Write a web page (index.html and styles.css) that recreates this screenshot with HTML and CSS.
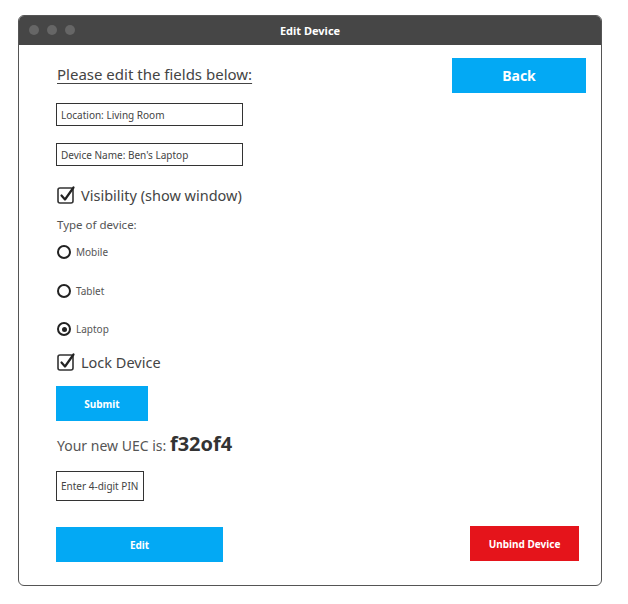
FILE: index.html
```html
<!DOCTYPE html>
<html>
<head>
<meta charset="utf-8">
<link rel="stylesheet" href="styles.css">
</head>
<body>
<div class="window">
  <div class="titlebar">
    <div class="dots"><span class="dot"></span><span class="dot"></span><span class="dot"></span></div>
    <div class="title">Edit Device</div>
  </div>
  <div class="content">
    <div class="header-row">
      <div class="heading">Please edit the fields below:</div>
      <div class="btn btn-back">Back</div>
    </div>
    <div class="field field-1">Location: Living Room</div>
    <div class="field field-2">Device Name: Ben's Laptop</div>
    <div class="check-row check-vis">
      <svg class="checkbox" width="20" height="20" viewBox="0 0 20 20"><rect x="1" y="3" width="15" height="15" rx="2" fill="none" stroke="#333" stroke-width="1.6"/><path d="M4.5 10.5 L8 14.5 L16.5 2.5" fill="none" stroke="#222" stroke-width="2.2" stroke-linecap="round" stroke-linejoin="round"/></svg>
      <span class="check-label">Visibility (show window)</span>
    </div>
    <div class="type-label">Type of device:</div>
    <div class="radio-row radio-mobile"><span class="radio"></span><span class="radio-label">Mobile</span></div>
    <div class="radio-row radio-tablet"><span class="radio"></span><span class="radio-label">Tablet</span></div>
    <div class="radio-row radio-laptop"><span class="radio radio-on"></span><span class="radio-label">Laptop</span></div>
    <div class="check-row check-lock">
      <svg class="checkbox" width="20" height="20" viewBox="0 0 20 20"><rect x="1" y="3" width="15" height="15" rx="2" fill="none" stroke="#333" stroke-width="1.6"/><path d="M4.5 10.5 L8 14.5 L16.5 2.5" fill="none" stroke="#222" stroke-width="2.2" stroke-linecap="round" stroke-linejoin="round"/></svg>
      <span class="check-label">Lock Device</span>
    </div>
    <div class="btn btn-submit">Submit</div>
    <div class="uec">Your new UEC is: <b class="code">f32of4</b></div>
    <div class="field field-pin">Enter 4-digit PIN</div>
    <div class="bottom-row">
      <div class="btn btn-edit">Edit</div>
      <div class="btn btn-unbind">Unbind Device</div>
    </div>
  </div>
</div>
</body>
</html>
```
FILE: styles.css
```css
* { box-sizing: border-box; }
body {
  margin: 0;
  background: #fff;
  font-family: "Noto Sans", "Open Sans", sans-serif;
}
.window {
  margin: 15px 0 0 18px;
  width: 584px;
  border: 1px solid #555;
  border-radius: 6px;
  overflow: hidden;
}
.titlebar {
  height: 29px;
  background: #464646;
  position: relative;
  display: flex;
  align-items: center;
  justify-content: center;
}
.dots {
  position: absolute;
  left: 10px;
  top: 9px;
  display: flex;
  gap: 8px;
}
.dot {
  width: 10px;
  height: 10px;
  border-radius: 50%;
  background: #666;
}
.title {
  color: #fff;
  font-size: 11px;
  font-weight: bold;
}
.content {
  padding: 13px 15px 23px 37px;
  display: flex;
  flex-direction: column;
  align-items: flex-start;
  color: #444;
}
.header-row {
  width: 100%;
  display: flex;
  justify-content: space-between;
  align-items: center;
  height: 35px;
}
.heading {
  font-size: 15px;
  text-decoration: underline;
  text-underline-offset: 3px;
  color: #444;
  padding-left: 1px;
  margin-top: -4px;
}
.btn {
  background: #03a9f4;
  color: #fff;
  font-weight: bold;
  font-size: 10px;
  display: flex;
  align-items: center;
  justify-content: center;
}
.btn-back { width: 134px; height: 35px; font-size: 14px; }
.field {
  border: 1.5px solid #333;
  font-size: 10px;
  color: #444;
  display: flex;
  align-items: center;
  padding-left: 4px;
}
.field-1 { width: 187px; height: 23px; margin-top: 10px; }
.field-2 { width: 187px; height: 23px; margin-top: 17px; }
.check-row {
  display: flex;
  align-items: center;
  height: 20px;
}
.checkbox { margin-left: 1px; margin-right: 4px; }
.check-label { font-size: 14.5px; color: #444; }
.check-vis { margin-top: 19px; }
.check-lock { margin-top: 15px; }
.type-label {
  font-size: 11.5px;
  color: #555;
  height: 16px;
  line-height: 16px;
  margin-top: 12px;
  padding-left: 1px;
}
.radio-row {
  display: flex;
  align-items: center;
  height: 16px;
}
.radio {
  width: 14px;
  height: 14px;
  border: 2px solid #222;
  border-radius: 50%;
  margin-left: 1px;
  margin-right: 5px;
  display: flex;
  align-items: center;
  justify-content: center;
}
.radio-on::after {
  content: "";
  width: 5px;
  height: 5px;
  border-radius: 50%;
  background: #222;
}
.radio-label { font-size: 10px; color: #555; }
.radio-mobile { margin-top: 11px; }
.radio-tablet { margin-top: 23px; }
.radio-laptop { margin-top: 22px; }
.btn-submit { width: 92px; height: 35px; margin-top: 14px; }
.uec {
  font-size: 14px;
  color: #555;
  height: 24px;
  line-height: 24px;
  margin-top: 11px;
  padding-left: 1px;
}
.code { font-size: 20px; color: #333; }
.field-pin { width: 88px; height: 30px; margin-top: 15px; padding-left: 4px; font-size: 10px; }
.bottom-row {
  width: 100%;
  display: flex;
  justify-content: space-between;
  align-items: flex-start;
  margin-top: 25px;
  padding-right: 7px;
}
.btn-edit { width: 167px; height: 35px; margin-top: 1px; }
.btn-unbind { width: 109px; height: 35px; background: #e5141b; }
```
